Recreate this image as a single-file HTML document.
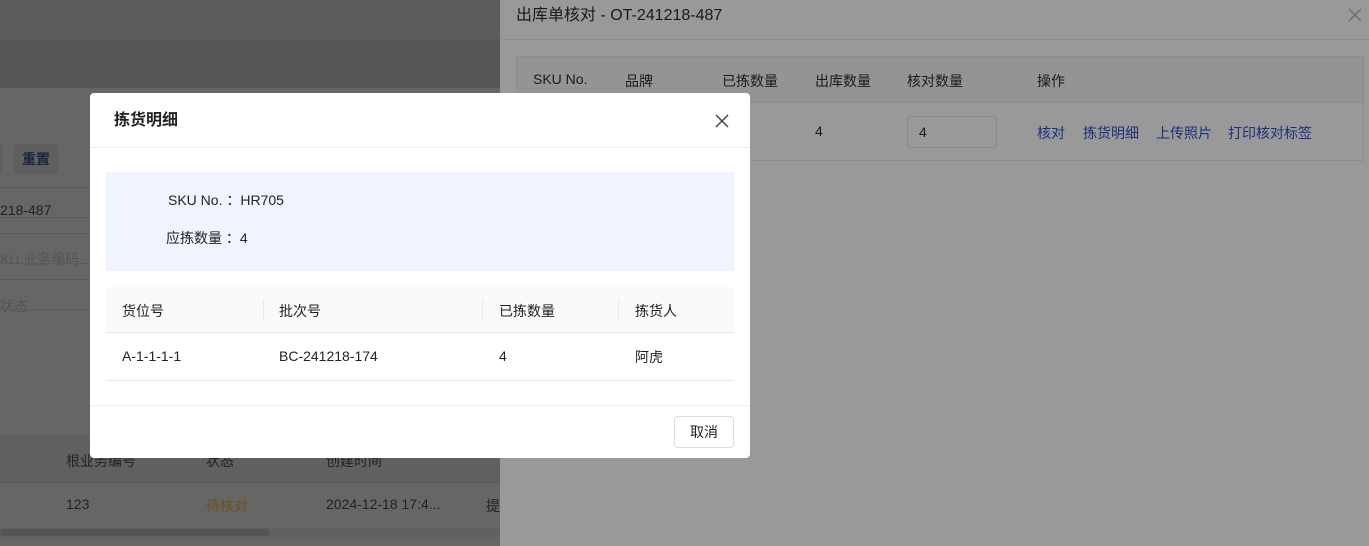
<!DOCTYPE html>
<html><head><meta charset="utf-8"><style>
*{margin:0;padding:0;box-sizing:border-box}
body{width:1369px;height:546px;overflow:hidden;position:relative;font-family:"Liberation Sans","Noto Sans CJK SC",sans-serif;font-size:14px;background:#666}
.abs{position:absolute}
</style></head><body>
<div class="abs" style="left:0;top:0;width:500px;height:40px;background:#5c5c5c"></div>
<div class="abs" style="left:0;top:40px;width:500px;height:48px;background:#565656"></div>
<div class="abs" style="left:0;top:88px;width:500px;height:458px;background:#666"></div>
<div class="abs" style="left:0;top:144px;width:2px;height:30px;background:#5e5e5e"></div>
<div class="abs" style="left:14px;top:144px;width:44px;height:30px;background:#5f5f5f;border-radius:3px;color:#1a2440;font-weight:bold;text-align:center;line-height:30px">重置</div>
<div class="abs" style="left:0;top:187px;width:500px;height:1px;background:#5c5c5c"></div>
<div class="abs" style="left:0;top:202px;color:#222;font-size:14px">218-487</div>
<div class="abs" style="left:0;top:217px;width:500px;height:1px;background:#5c5c5c"></div>
<div class="abs" style="left:0;top:233px;width:500px;height:1px;background:#5c5c5c"></div>
<div class="abs" style="left:0;top:249px;color:#555;font-size:14px">KU 业务编码</div>
<div class="abs" style="left:0;top:263px;width:500px;height:1px;background:#5c5c5c"></div>
<div class="abs" style="left:0;top:279px;width:500px;height:1px;background:#5c5c5c"></div>
<div class="abs" style="left:0;top:296px;color:#555;font-size:14px">状态</div>
<div class="abs" style="left:0;top:309px;width:500px;height:1px;background:#5c5c5c"></div>
<div class="abs" style="left:0;top:435px;width:500px;height:48px;background:#606060;border-bottom:1px solid #5a5a5a"></div>
<div class="abs" style="left:66px;top:451px;color:#222">根业务编号</div>
<div class="abs" style="left:206px;top:451px;color:#222">状态</div>
<div class="abs" style="left:326px;top:451px;color:#222">创建时间</div>
<div class="abs" style="left:66px;top:496px;color:#222">123</div>
<div class="abs" style="left:206px;top:496px;color:#6b5418">待核对</div>
<div class="abs" style="left:326px;top:496px;color:#222">2024-12-18 17:4...</div>
<div class="abs" style="left:486px;top:496px;color:#222">提</div>
<div class="abs" style="left:0;top:528px;width:500px;height:9px;background:#616161"></div>
<div class="abs" style="left:0;top:529px;width:270px;height:7px;background:#555;border-radius:4px"></div>
<!-- drawer -->
<div class="abs" style="left:500px;top:0;width:869px;height:546px;background:#999"></div>
<div class="abs" style="left:516px;top:6px;font-size:16px;color:#1a1a1a;line-height:20px">出库单核对 - OT-241218-487</div>
<svg class="abs" style="left:1348px;top:8px" width="14" height="14" viewBox="0 0 14 14"><path d="M1 1L13 13M13 1L1 13" stroke="#666" stroke-width="1.2"/></svg>
<div class="abs" style="left:500px;top:39px;width:869px;height:1px;background:#8f8f8f"></div>
<div class="abs" style="left:516px;top:56px;width:848px;height:105px;border:1px solid #8e8e8e"></div>
<div class="abs" style="left:517px;top:57px;width:846px;height:46px;background:#949494;border-bottom:1px solid #8e8e8e"></div>
<div class="abs" style="top:71px;left:533px;color:#1a1a1a">SKU No.</div>
<div class="abs" style="top:71px;left:625px;color:#1a1a1a">品牌</div>
<div class="abs" style="top:71px;left:722px;color:#1a1a1a">已拣数量</div>
<div class="abs" style="top:71px;left:815px;color:#1a1a1a">出库数量</div>
<div class="abs" style="top:71px;left:907px;color:#1a1a1a">核对数量</div>
<div class="abs" style="top:71px;left:1037px;color:#1a1a1a">操作</div>
<div class="abs" style="top:123px;left:815px;color:#1a1a1a">4</div>
<div class="abs" style="left:907px;top:116px;width:90px;height:32px;border:1px solid #8a8a8a;border-radius:4px;padding-left:11px;line-height:30px;color:#1a1a1a">4</div>
<div class="abs" style="top:123px;left:1037px;color:#1d2f7a">核对</div>
<div class="abs" style="top:123px;left:1083px;color:#1d2f7a">拣货明细</div>
<div class="abs" style="top:123px;left:1156px;color:#1d2f7a">上传照片</div>
<div class="abs" style="top:123px;left:1228px;color:#1d2f7a">打印核对标签</div>
<!-- modal -->
<div class="abs" style="left:90px;top:93px;width:660px;height:365px;background:#fff;border-radius:4px"></div>
<div class="abs" style="left:114px;top:110px;font-size:16px;font-weight:bold;color:#222;line-height:22px">拣货明细</div>
<svg class="abs" style="left:715px;top:114px" width="14" height="14" viewBox="0 0 14 14"><path d="M1 1L13 13M13 1L1 13" stroke="#444" stroke-width="1.5"/></svg>
<div class="abs" style="left:90px;top:147px;width:660px;height:1px;background:#eee"></div>
<div class="abs" style="left:106px;top:172px;width:628px;height:99px;background:#eff4fe"></div>
<div class="abs" style="left:168px;top:190px;color:#222">SKU No. ：HR705</div>
<div class="abs" style="left:166px;top:228px;color:#222">应拣数量 ：4</div>
<div class="abs" style="left:106px;top:287px;width:628px;height:46px;background:#fafafa;border-bottom:1px solid #e8e8e8"></div>
<div class="abs" style="left:263px;top:299px;width:1px;height:22px;background:#eaeaea"></div>
<div class="abs" style="left:482px;top:299px;width:1px;height:22px;background:#eaeaea"></div>
<div class="abs" style="left:618px;top:299px;width:1px;height:22px;background:#eaeaea"></div>
<div class="abs" style="left:122px;top:301px;color:#222">货位号</div>
<div class="abs" style="left:279px;top:301px;color:#222">批次号</div>
<div class="abs" style="left:499px;top:301px;color:#222">已拣数量</div>
<div class="abs" style="left:635px;top:301px;color:#222">拣货人</div>
<div class="abs" style="left:122px;top:348px;color:#222">A-1-1-1-1</div>
<div class="abs" style="left:279px;top:348px;color:#222">BC-241218-174</div>
<div class="abs" style="left:499px;top:348px;color:#222">4</div>
<div class="abs" style="left:635px;top:347px;color:#222">阿虎</div>
<div class="abs" style="left:106px;top:380px;width:628px;height:1px;background:#e8e8e8"></div>
<div class="abs" style="left:90px;top:405px;width:660px;height:1px;background:#eee"></div>
<div class="abs" style="left:674px;top:416px;width:60px;height:32px;border:1px solid #ddd;border-radius:4px;text-align:center;line-height:30px;color:#222">取消</div>
</body></html>
